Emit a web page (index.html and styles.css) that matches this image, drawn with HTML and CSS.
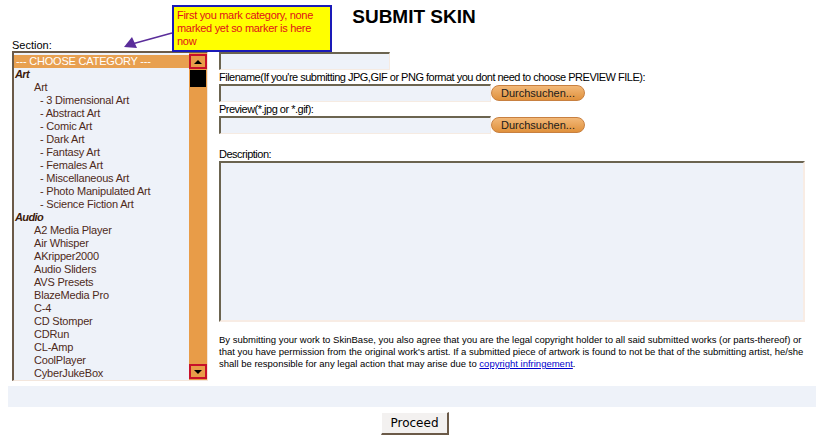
FILE: index.html
```html
<!DOCTYPE html>
<html>
<head>
<meta charset="utf-8">
<link rel="stylesheet" href="styles.css">
</head>
<body>
<div class="page">
  <h1 class="title">SUBMIT SKIN</h1>
  <div class="main">
    <div class="left">
      <div class="label">Section:</div>
      <div class="listbox">
        <div class="options">
          <div class="opt selected">--- CHOOSE CATEGORY ---</div>
          <div class="opt cat">Art</div>
          <div class="opt l1">Art</div>
          <div class="opt l2">- 3 Dimensional Art</div>
          <div class="opt l2">- Abstract Art</div>
          <div class="opt l2">- Comic Art</div>
          <div class="opt l2">- Dark Art</div>
          <div class="opt l2">- Fantasy Art</div>
          <div class="opt l2">- Females Art</div>
          <div class="opt l2">- Miscellaneous Art</div>
          <div class="opt l2">- Photo Manipulated Art</div>
          <div class="opt l2">- Science Fiction Art</div>
          <div class="opt cat">Audio</div>
          <div class="opt l1">A2 Media Player</div>
          <div class="opt l1">Air Whisper</div>
          <div class="opt l1">AKripper2000</div>
          <div class="opt l1">Audio Sliders</div>
          <div class="opt l1">AVS Presets</div>
          <div class="opt l1">BlazeMedia Pro</div>
          <div class="opt l1">C-4</div>
          <div class="opt l1">CD Stomper</div>
          <div class="opt l1">CDRun</div>
          <div class="opt l1">CL-Amp</div>
          <div class="opt l1">CoolPlayer</div>
          <div class="opt l1">CyberJukeBox</div>
        </div>
        <div class="scrollbar">
          <div class="sbtn"><span class="tri up"></span></div>
          <div class="thumb"></div>
          <div class="track"></div>
          <div class="sbtn"><span class="tri down"></span></div>
        </div>
      </div>
    </div>
    <div class="right">
      <div class="field short"></div>
      <div class="label">Filename(If you're submitting JPG,GIF or PNG format you dont need to choose PREVIEW FILE):</div>
      <div class="filerow">
        <div class="field long"></div>
        <div class="browse">Durchsuchen...</div>
      </div>
      <div class="label">Preview(*.jpg or *.gif):</div>
      <div class="filerow">
        <div class="field long"></div>
        <div class="browse">Durchsuchen...</div>
      </div>
      <div class="label desc">Description:</div>
      <div class="textarea"></div>
      <p class="disclaimer">By submitting your work to SkinBase, you also agree that you are the legal copyright holder to all said submitted works (or parts-thereof) or that you have permission from the original work's artist. If a submitted piece of artwork is found to not be that of the submitting artist, he/she shall be responsible for any legal action that may arise due to <a href="#">copyright infringement</a>.</p>
    </div>
  </div>
  <div class="band"></div>
  <div class="actions"><button class="proceed">Proceed</button></div>

  <div class="note">First you mark category, none marked yet so marker is here now</div>
  <svg class="arrow" width="60" height="30" viewBox="0 0 60 30">
    <line x1="52" y1="5" x2="12" y2="16" stroke="#5a2d9a" stroke-width="1.5"/>
    <polygon points="4,19 12,9 17,20" fill="#5a2d9a"/>
  </svg>
</div>
</body>
</html>
```

FILE: styles.css
```css
* { box-sizing: border-box; }
html, body { margin: 0; padding: 0; background: #fff; }
.page {
  position: relative;
  width: 824px;
  height: 448px;
  padding: 8px 8px 0 8px;
  font-family: "Liberation Sans", Arial, sans-serif;
  color: #000;
}
.title {
  margin: 0;
  height: 30px;
  text-align: center;
  font-size: 19px;
  line-height: 18px;
  font-weight: bold;
  color: #000;
  padding-left: 4px;
}
.main {
  display: grid;
  grid-template-columns: 196px 587px;
  column-gap: 11px;
  padding-left: 4px;
}
.label {
  font-size: 11px;
  line-height: 13px;
  height: 13px;
  color: #000;
  white-space: nowrap;
  letter-spacing: -0.5px;
}
.left .label { padding-top: 1px; letter-spacing: 0; }
.listbox {
  display: flex;
  width: 196px;
  height: 330px;
  border-top: 2px solid #6b5a48;
  border-left: 2px solid #6b5a48;
  border-bottom: 1px solid #f3e6dc;
  border-right: 1px solid #f3e6dc;
  background: #eef2f9;
}
.options {
  flex: 1;
  padding-top: 2px;
  overflow: hidden;
}
.opt {
  height: 13px;
  line-height: 13px;
  font-size: 11px;
  color: #4e2a1a;
  white-space: nowrap;
  letter-spacing: -0.2px;
}
.opt.selected {
  background: #e8a050;
  color: #fff;
  padding-left: 2px;
}
.opt.cat {
  font-weight: bold;
  font-style: italic;
  color: #3c1a0a;
  padding-left: 1px;
  letter-spacing: -0.6px;
}
.opt.l1 { padding-left: 20px; }
.opt.l2 { padding-left: 26px; }
.scrollbar {
  width: 18px;
  display: flex;
  flex-direction: column;
  background: #e89c48;
  padding-top: 1px;
  padding-bottom: 1px;
}
.sbtn {
  height: 15px;
  border: 2px solid #c8102a;
  background: #e89c48;
  display: flex;
  align-items: center;
  justify-content: center;
}
.tri { width: 0; height: 0; border-left: 4px solid transparent; border-right: 4px solid transparent; }
.tri.up { border-bottom: 4px solid #000; }
.tri.down { border-top: 4px solid #000; }
.thumb {
  height: 17px;
  margin: 1px 1px 0 1px;
  background: #000;
}
.track { flex: 1; }
.right {
  padding-top: 14px;
  display: flex;
  flex-direction: column;
}
.field {
  height: 18px;
  background: #eef2f9;
  border-top: 2px solid #6b6450;
  border-left: 2px solid #6b6450;
  border-bottom: 1px solid #f6ebe2;
  border-right: 1px solid #f6ebe2;
}
.field.short { width: 171px; margin-bottom: 1px; }
.field.long { width: 272px; }
.filerow {
  display: flex;
  align-items: flex-start;
  margin-bottom: 1px;
}
.browse {
  margin-top: 1px;
  width: 94px;
  height: 16px;
  border-radius: 8px;
  background: linear-gradient(#f2b878, #e0913c);
  border: 1px solid #c88040;
  font-size: 11px;
  line-height: 14px;
  text-align: center;
  color: #1a1a1a;
}
.label.desc { margin-top: 13px; }
.textarea {
  width: 586px;
  height: 161px;
  background: #eef2f9;
  border-top: 2px solid #6b6450;
  border-left: 2px solid #6b6450;
  border-bottom: 2px solid #f8ece4;
  border-right: 2px solid #f8ece4;
}
.disclaimer {
  margin: 12px 0 0 0;
  font-size: 9.5px;
  line-height: 12px;
  color: #000;
  width: 590px;
}
.disclaimer a { color: #0000cc; text-decoration: underline; }
.band {
  margin-top: 5px;
  height: 21px;
  background: #eef2f9;
}
.actions {
  display: flex;
  justify-content: center;
  padding-top: 5px;
}
.proceed {
  width: 68px;
  height: 23px;
  padding: 0;
  margin-left: 6px;
  background: #f3f1f0;
  border-top: 1px solid #fff;
  border-left: 1px solid #fff;
  border-bottom: 2px solid #6b5a48;
  border-right: 2px solid #6b5a48;
  font-family: "DejaVu Sans", Verdana, sans-serif;
  font-size: 12px;
  color: #000;
}
.note {
  position: absolute;
  left: 172px;
  top: 5px;
  width: 160px;
  height: 47px;
  background: #ffff00;
  border: 2px solid #1a1ab8;
  padding: 2px 2px 0 3px;
  font-size: 11px;
  line-height: 13px;
  letter-spacing: -0.3px;
  color: #e0101a;
}
.arrow {
  position: absolute;
  left: 120px;
  top: 28px;
}
```
